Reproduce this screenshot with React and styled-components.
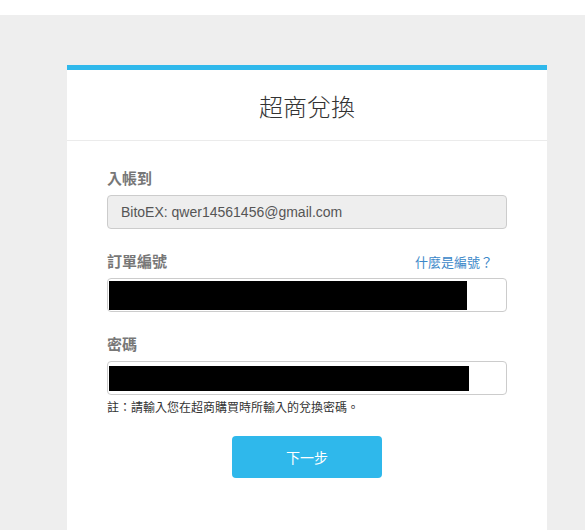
import React from 'react';
import styled, { createGlobalStyle } from 'styled-components';

const GlobalStyle = createGlobalStyle`
  html, body {
    margin: 0;
    padding: 0;
    background: #fff;
    font-family: "Liberation Sans", "Noto Sans CJK TC", Arial, sans-serif;
    overflow: hidden;
  }
`;

const Page = styled.div`
  margin-top: 15px;
  min-height: 515px;
  padding-top: 50px;
  background: #eeeeee;
  box-sizing: border-box;
`;

const Card = styled.div`
  width: 480px;
  margin-left: 67px;
  background: #fff;
  border-top: 5px solid #2fb8eb;
  padding-bottom: 60px;
`;

const Header = styled.div`
  height: 70px;
  display: flex;
  align-items: center;
  justify-content: center;
  border-bottom: 1px solid #ebebeb;
`;

const Title = styled.h1`
  margin: 0;
  font-size: 24px;
  font-weight: 300;
  color: #333;
`;

const Body = styled.div`
  padding: 26px 40px 0;
`;

const Group = styled.div`
  margin-bottom: ${(p) => (p.$last ? 0 : 21)}px;
`;

const LabelRow = styled.div`
  display: flex;
  align-items: center;
  justify-content: space-between;
  height: 20px;
  margin-bottom: 8px;
`;

const Label = styled.label`
  font-size: 15px;
  font-weight: bold;
  color: #777;
`;

const HelpLink = styled.a`
  font-size: 13px;
  color: #3a87c8;
  text-decoration: none;
  margin-right: 14px;
  margin-top: 2px;
`;

const Field = styled.div`
  height: 34px;
  box-sizing: border-box;
  border: 1px solid #ccc;
  border-radius: 4px;
  background: ${(p) => (p.$readonly ? '#eeeeee' : '#fff')};
  display: flex;
  align-items: center;
  padding: ${(p) => (p.$readonly ? '0 13px' : '2px 0 2px 1px')};
  font-size: 14px;
  color: #555;
`;

const Redaction = styled.div`
  height: ${(p) => p.$h}px;
  width: ${(p) => p.$w}px;
  background: #000;
`;

const Note = styled.p`
  margin: 3px 0 0;
  font-size: 12px;
  line-height: 20px;
  color: #333;
`;

const Actions = styled.div`
  display: flex;
  justify-content: center;
  margin-top: 18px;
`;

const Button = styled.button`
  width: 150px;
  height: 42px;
  border: none;
  border-radius: 4px;
  background: #2fb8eb;
  color: #fff;
  font-size: 14px;
  font-family: inherit;
  cursor: pointer;
`;

export default function App() {
  return (
    <>
      <GlobalStyle />
      <Page>
        <Card>
          <Header>
            <Title>超商兌換</Title>
          </Header>
          <Body>
            <Group>
              <LabelRow>
                <Label>入帳到</Label>
              </LabelRow>
              <Field $readonly>BitoEX: qwer14561456@gmail.com</Field>
            </Group>
            <Group>
              <LabelRow>
                <Label>訂單編號</Label>
                <HelpLink href="#">什麼是編號？</HelpLink>
              </LabelRow>
              <Field>
                <Redaction $w={358} $h={29} />
              </Field>
            </Group>
            <Group $last>
              <LabelRow>
                <Label>密碼</Label>
              </LabelRow>
              <Field>
                <Redaction $w={360} $h={25} />
              </Field>
              <Note>註：請輸入您在超商購買時所輸入的兌換密碼。</Note>
            </Group>
            <Actions>
              <Button>下一步</Button>
            </Actions>
          </Body>
        </Card>
      </Page>
    </>
  );
}
